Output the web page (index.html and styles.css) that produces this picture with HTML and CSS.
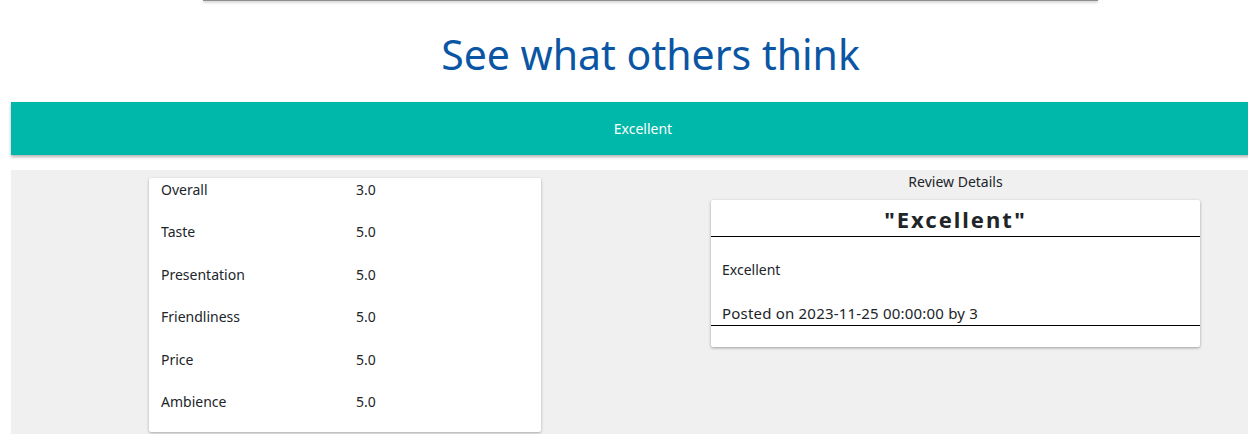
FILE: index.html
```html
<!DOCTYPE html>
<html>
<head>
<meta charset="utf-8">
<link rel="stylesheet" href="styles.css">
</head>
<body>
<div class="page">
  <div class="topbar"></div>
  <h1 class="title">See what others think</h1>
  <div class="banner">Excellent</div>
  <div class="panel">
    <div class="ratings">
      <div class="row"><span class="label">Overall</span><span class="value">3.0</span></div>
      <div class="row"><span class="label">Taste</span><span class="value">5.0</span></div>
      <div class="row"><span class="label">Presentation</span><span class="value">5.0</span></div>
      <div class="row"><span class="label">Friendliness</span><span class="value">5.0</span></div>
      <div class="row"><span class="label">Price</span><span class="value">5.0</span></div>
      <div class="row"><span class="label">Ambience</span><span class="value">5.0</span></div>
    </div>
    <div class="details">
      <div class="details-head">Review Details</div>
      <div class="review">
        <div class="review-title">"Excellent"</div>
        <div class="review-body">
          <p class="review-text">Excellent</p>
          <p class="review-meta">Posted on 2023-11-25 00:00:00 by 3</p>
        </div>
      </div>
    </div>
  </div>
</div>
</body>
</html>
```

FILE: styles.css
```css
html, body {
  margin: 0;
  padding: 0;
  overflow: hidden;
  background: #ffffff;
}
body {
  font-family: "Noto Sans", "Open Sans", sans-serif;
  color: #212529;
  font-size: 14px;
}
.page {
  width: 1290px;
}
.topbar {
  margin-left: 203px;
  width: 895px;
  height: 1px;
  background: #8f8f8f;
  box-shadow: 0 1px 3px rgba(0,0,0,0.45);
}
.title {
  margin: 23px 0 0 11px;
  width: 1279px;
  text-align: center;
  font-weight: 400;
  font-size: 41px;
  line-height: 60px;
  color: #0b56a4;
}
.banner {
  margin: 18px 0 0 11px;
  width: 1264px;
  height: 53px;
  background: #00b8a9;
  color: #ffffff;
  display: flex;
  align-items: center;
  justify-content: center;
  font-size: 14px;
  box-shadow: 0 2px 3px rgba(0,0,0,0.3);
}
.panel {
  margin: 15px 0 0 11px;
  width: 1264px;
  height: 264px;
  box-sizing: border-box;
  background: #f0f0f0;
  display: flex;
  align-items: flex-start;
  padding-top: 8px;
}
.ratings {
  margin-left: 138px;
  width: 392px;
  background: #ffffff;
  box-shadow: 0 1px 3px rgba(0,0,0,0.3);
  border-radius: 2px;
  padding-top: 1px;
}
.row {
  display: flex;
  height: 21px;
  line-height: 21px;
  margin-bottom: 21.4px;
  padding-left: 12px;
}
.row:last-child {
  margin-bottom: 20.5px;
}
.label {
  width: 195px;
}
.details {
  margin-left: 170px;
  width: 489px;
  margin-top: -8px;
}
.details-head {
  text-align: center;
  line-height: 21px;
  padding-top: 1px;
  margin-bottom: 8px;
}
.review {
  background: #ffffff;
  box-shadow: 0 1px 3px rgba(0,0,0,0.35);
  border-radius: 2px;
}
.review-title {
  height: 36px;
  border-bottom: 1px solid #000000;
  text-align: center;
  font-weight: 700;
  font-size: 22px;
  letter-spacing: 2px;
  line-height: 38px;
  color: #212529;
}
.review-body {
  padding: 0 11px 21px 11px;
}
.review-text {
  margin: 0;
  padding-top: 21.5px;
  line-height: 21px;
}
.review-meta {
  margin: 23px -11px 0 -11px;
  padding-left: 11px;
  font-size: 15px;
  letter-spacing: 0.2px;
  line-height: 21px;
  border-bottom: 1px solid #000000;
  padding-bottom: 1px;
}
```
